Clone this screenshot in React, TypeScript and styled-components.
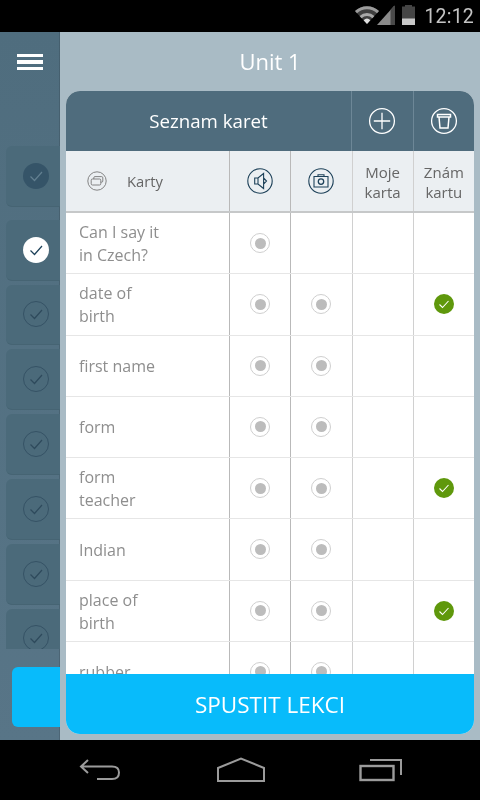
import React from 'react';
import styled, { createGlobalStyle } from 'styled-components';

type Card = {
  lines: string[];
  audio: boolean;
  photo: boolean;
  known: boolean;
};

const cards: Card[] = [
  { lines: ['Can I say it', 'in Czech?'], audio: true, photo: false, known: false },
  { lines: ['date of', 'birth'], audio: true, photo: true, known: true },
  { lines: ['first name'], audio: true, photo: true, known: false },
  { lines: ['form'], audio: true, photo: true, known: false },
  { lines: ['form', 'teacher'], audio: true, photo: true, known: true },
  { lines: ['Indian'], audio: true, photo: true, known: false },
  { lines: ['place of', 'birth'], audio: true, photo: true, known: true },
  { lines: ['rubber'], audio: true, photo: true, known: false },
];

const lessons = ['done', 'active', 'idle', 'idle', 'idle', 'idle', 'idle', 'idle'] as const;

const App: React.FC = () => {
  return (
    <>
      <GlobalStyle />
      <Screen>
        <StatusBar>
          <svg width="60" height="20" viewBox="0 0 60 20">
            <path d="M0 6 A17.5 17.5 0 0 1 24 6 L12 19 Z" fill="#3f3f3f" />
            <path d="M0 6 A17.5 17.5 0 0 1 24 6 L22 8.2 A14.5 14.5 0 0 0 2 8.2 Z" fill="#9c9c9c" />
            <path d="M4.6 11 A10.5 10.5 0 0 1 19.4 11 L17.4 13.2 A7.6 7.6 0 0 0 6.6 13.2 Z" fill="#a8a8a8" />
            <path d="M8.6 15.2 A5 5 0 0 1 15.4 15.2 L12 19 Z" fill="#e0e0e0" />
            <path d="M22 20 L39.5 0.5 V20 Z" fill="#8b8b8b" />
            <path d="M35.5 5 L39.5 0.5 V20 H35.5 Z" fill="#4a4a4a" />
            <rect x="47" y="1.5" width="13" height="18.5" fill="#454545" />
            <rect x="50" y="0" width="7" height="2" fill="#454545" />
            <rect x="47" y="13.5" width="13" height="6.5" fill="#c8c8c8" />
          </svg>
          <Clock>12:12</Clock>
        </StatusBar>
        <Main>
          <Sidebar>
            <MenuButton>
              <span />
              <span />
              <span />
            </MenuButton>
            <LessonList>
              {lessons.map((state, i) => (
                <LessonItem key={i}>
                  <LessonMark $state={state}>
                    <svg width="16" height="16" viewBox="0 0 16 16">
                      <path d="M2.5 8.5 L6.5 12.5 L14 4" fill="none" strokeWidth="1.2" stroke={state === 'active' ? '#1d4159' : state === 'done' ? '#627f90' : '#2e4a5c'} />
                    </svg>
                  </LessonMark>
                </LessonItem>
              ))}
            </LessonList>
            <SideStart />
          </Sidebar>
          <Content>
            <Title>Unit 1</Title>
            <Panel>
              <PanelHeader>
                <PanelTitle>Seznam karet</PanelTitle>
                <HeaderAction>
                  <svg width="28" height="28" viewBox="0 0 28 28" fill="none" stroke="#fff" strokeWidth="1.3">
                    <circle cx="14" cy="14" r="12.4" />
                    <path d="M14 5.8 V22.2 M5.8 14 H22.2" />
                  </svg>
                </HeaderAction>
                <HeaderAction>
                  <svg width="28" height="28" viewBox="0 0 28 28" fill="none" stroke="#fff" strokeWidth="1.5">
                    <circle cx="14" cy="14" r="12.4" strokeWidth="1.3" />
                    <path d="M7.5 7.5 H20.5 V10 H7.5 Z M9 10 L10 21 H18 L19 10" />
                  </svg>
                </HeaderAction>
              </PanelHeader>
              <ColumnHead>
                <NameHead>
                  <svg width="20" height="20" viewBox="0 0 20 20" fill="none" stroke="#777" strokeWidth="0.9">
                    <circle cx="10" cy="10" r="9.2" />
                    <rect x="6.8" y="5.6" width="9" height="5.6" rx="1.2" />
                    <rect x="4.2" y="8" width="9.6" height="6" rx="1.2" fill="#ebeff2" />
                  </svg>
                  <span>Karty</span>
                </NameHead>
                <HeadCell $strong>
                  <svg width="26" height="26" viewBox="0 0 26 26" fill="none" stroke="#1d4159" strokeWidth="1.1">
                    <circle cx="13" cy="13" r="12.2" />
                    <path d="M7.7 10 H11 L16.6 5.5 V20.5 L11 16 H7.7 Z M11 10 V16 M16.6 10 L19.5 13 L16.6 16" />
                  </svg>
                </HeadCell>
                <HeadCell $strong>
                  <svg width="26" height="26" viewBox="0 0 26 26" fill="none" stroke="#1d4159" strokeWidth="1.1">
                    <circle cx="13" cy="13" r="12.2" />
                    <path d="M6 8.5 H20 V19 H6 Z M10 8.5 V6.8 H16 V8.5" />
                    <circle cx="13" cy="13.6" r="2.7" strokeWidth="1.3" />
                  </svg>
                </HeadCell>
                <HeadCell><HeadLabel>Moje<br />karta</HeadLabel></HeadCell>
                <HeadCell><HeadLabel>Znám<br />kartu</HeadLabel></HeadCell>
              </ColumnHead>
              <Rows>
                {cards.map((card) => (
                  <Row key={card.lines.join(' ')}>
                    <NameCell>
                      {card.lines.map((line) => (
                        <span key={line}>{line}</span>
                      ))}
                    </NameCell>
                    <Cell $strong>{card.audio && <Radio />}</Cell>
                    <Cell $strong>{card.photo && <Radio />}</Cell>
                    <Cell />
                    <Cell>
                      {card.known && (
                        <KnownMark>
                          <svg width="12" height="12" viewBox="0 0 12 12">
                            <path d="M1.5 6.5 L4.5 9.5 L10.5 3" fill="none" stroke="#fff" strokeWidth="1.1" />
                          </svg>
                        </KnownMark>
                      )}
                    </Cell>
                  </Row>
                ))}
              </Rows>
              <StartButton>SPUSTIT LEKCI</StartButton>
            </Panel>
          </Content>
        </Main>
        <NavBar>
          <svg width="44" height="24" viewBox="0 0 44 24" fill="none" stroke="#9b9b9b" strokeWidth="2">
            <path d="M10 2 L3 8.5 L10 15 M3 8.5 H34 Q41 8.5 41 14.5 Q41 21 34 21 H19" />
          </svg>
          <svg width="48" height="26" viewBox="0 0 48 26" fill="none" stroke="#9b9b9b" strokeWidth="2">
            <path d="M1 11 L24 1.5 L47 11 V24 H1 Z" />
          </svg>
          <svg width="44" height="24" viewBox="0 0 44 24" fill="none" stroke="#9b9b9b" strokeWidth="2">
            <rect x="1.5" y="8" width="33" height="14" strokeWidth="2.4" />
            <path d="M11 2 H42 V17" />
          </svg>
        </NavBar>
      </Screen>
    </>
  );
};

const GlobalStyle = createGlobalStyle`
  html, body {
    margin: 0;
    padding: 0;
    background: #000;
  }
  body {
    font-family: "Open Sans", "Liberation Sans", sans-serif;
  }
`;

const Screen = styled.div`
  width: 480px;
  height: 800px;
  display: flex;
  flex-direction: column;
  overflow: hidden;
  will-change: transform;
`;

const StatusBar = styled.div`
  height: 32px;
  flex: none;
  background: #000;
  display: flex;
  align-items: center;
  justify-content: flex-end;
  padding-right: 6px;
  gap: 9px;
  svg {
    margin-top: -2px;
  }
`;

const Clock = styled.span`
  font-family: Roboto, sans-serif;
  font-size: 19.5px;
  color: #c4c4c4;
  letter-spacing: 0.2px;
`;

const Main = styled.div`
  flex: 1;
  min-height: 0;
  display: flex;
  box-shadow: inset 0 2px 2px rgba(0, 0, 0, 0.2);
`;

const Sidebar = styled.div`
  width: 60px;
  flex: none;
  display: flex;
  flex-direction: column;
  align-items: flex-end;
  background: linear-gradient(#4f6d7e, #587587);
  box-shadow: inset -1px 0 0 rgba(0, 0, 0, 0.12);
`;

const MenuButton = styled.div`
  align-self: flex-start;
  height: 114px;
  flex: none;
  padding: 22px 0 0 17px;
  box-sizing: border-box;
  span {
    display: block;
    width: 26px;
    height: 3.4px;
    margin-bottom: 3.1px;
    background: #fff;
  }
`;

const LessonList = styled.div`
  width: 54px;
  height: 503px;
  flex: none;
  overflow: hidden;
  display: flex;
  flex-direction: column;
  gap: 4px;
`;

const LessonItem = styled.div`
  height: 60.8px;
  flex: none;
  box-sizing: border-box;
  background: #4b6a7a;
  border-bottom: 1px solid #466473;
  border-radius: 6px 0 0 6px;
  padding-left: 17px;
  display: flex;
  align-items: center;
  &:first-child {
    margin-bottom: 9px;
  }
`;

const LessonMark = styled.div<{ $state: 'done' | 'active' | 'idle' }>`
  width: 26px;
  height: 26px;
  box-sizing: border-box;
  border-radius: 50%;
  display: flex;
  align-items: center;
  justify-content: center;
  border: ${(props) => (props.$state === 'idle' ? '1px solid #355265' : 'none')};
  background: ${(props) =>
    props.$state === 'active' ? '#fff' : props.$state === 'done' ? '#355468' : 'transparent'};
`;

const SideStart = styled.div`
  width: 48px;
  height: 60px;
  flex: none;
  margin-top: 18px;
  background: #08bbfb;
  border-radius: 6px 0 0 6px;
`;

const Content = styled.div`
  flex: 1;
  min-width: 0;
  display: flex;
  flex-direction: column;
  padding: 0 6px 6px;
  background: #a9bbc5;
`;

const Title = styled.div`
  height: 59px;
  flex: none;
  display: flex;
  align-items: center;
  justify-content: center;
  color: #fff;
  font-size: 22px;
  padding-bottom: 1px;
  box-sizing: border-box;
`;

const Panel = styled.div`
  flex: 1;
  min-height: 0;
  display: flex;
  flex-direction: column;
  border-radius: 14px;
  overflow: hidden;
  background: #fff;
`;

const PanelHeader = styled.div`
  height: 60px;
  flex: none;
  display: grid;
  grid-template-columns: 285px 61.5px 1fr;
  background: #4f6c7d;
`;

const PanelTitle = styled.div`
  display: flex;
  align-items: center;
  justify-content: center;
  color: #fff;
  font-size: 18.7px;
  padding-bottom: 1px;
`;

const HeaderAction = styled.div`
  display: flex;
  align-items: center;
  justify-content: center;
  border-left: 1px solid #6d8797;
`;

const columns = '163px 61.25px 61.25px 61.25px 1fr';

const ColumnHead = styled.div`
  height: 62px;
  flex: none;
  box-sizing: border-box;
  display: grid;
  grid-template-columns: ${columns};
  background: #ebeff2;
  border-bottom: 2px solid #c6c8c9;
`;

const NameHead = styled.div`
  display: flex;
  align-items: center;
  padding-left: 21px;
  gap: 20px;
  font-size: 14.8px;
  color: #666;
`;

const HeadCell = styled.div<{ $strong?: boolean }>`
  display: flex;
  align-items: center;
  justify-content: center;
  text-align: center;
  color: #666;
  border-left: 1.5px solid ${(props) => (props.$strong ? '#b9b9b9' : '#d0d0d0')};
  box-sizing: border-box;
`;

const HeadLabel = styled.span`
  font-size: 15px;
  line-height: 20.5px;
  margin-top: 2px;
`;

const Rows = styled.div`
  flex: 1;
  min-height: 0;
  overflow: hidden;
`;

const Row = styled.div`
  height: 61.25px;
  box-sizing: border-box;
  display: grid;
  grid-template-columns: ${columns};
  border-bottom: 1.5px solid #e6e6e6;
`;

const NameCell = styled.div`
  display: flex;
  flex-direction: column;
  justify-content: center;
  padding: 2px 0 0 13px;
  font-size: 16px;
  line-height: 23px;
  color: #8e8e8e;
`;

const Cell = styled.div<{ $strong?: boolean }>`
  display: flex;
  align-items: center;
  justify-content: center;
  border-left: 1.5px solid ${(props) => (props.$strong ? '#b9b9b9' : '#d0d0d0')};
  box-sizing: border-box;
`;

const Radio = styled.div`
  width: 20px;
  height: 20px;
  box-sizing: border-box;
  border-radius: 50%;
  border: 1.3px solid #cfcfcf;
  display: flex;
  align-items: center;
  justify-content: center;
  &::after {
    content: '';
    width: 11px;
    height: 11px;
    border-radius: 50%;
    background: #bcbcbc;
  }
`;

const KnownMark = styled.div`
  width: 20px;
  height: 20px;
  border-radius: 50%;
  background: #5f980c;
  display: flex;
  align-items: center;
  justify-content: center;
`;

const StartButton = styled.div`
  height: 60px;
  flex: none;
  background: #08bbfb;
  color: #fff;
  font-size: 22.5px;
  display: flex;
  align-items: center;
  justify-content: center;
`;

const NavBar = styled.div`
  height: 60px;
  flex: none;
  background: #000;
  display: flex;
  align-items: center;
  padding: 0 77px 0 78px;
  justify-content: space-between;
`;

export default App;
